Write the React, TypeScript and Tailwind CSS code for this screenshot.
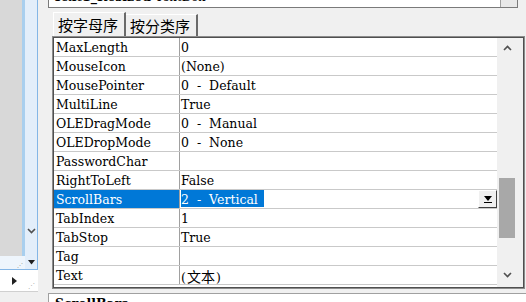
const rows = [
  { name: "MaxLength", value: "0" },
  { name: "MouseIcon", value: "(None)" },
  { name: "MousePointer", value: "0 - Default" },
  { name: "MultiLine", value: "True" },
  { name: "OLEDragMode", value: "0 - Manual" },
  { name: "OLEDropMode", value: "0 - None" },
  { name: "PasswordChar", value: "" },
  { name: "RightToLeft", value: "False" },
  { name: "ScrollBars", value: "2 - Vertical", selected: true },
  { name: "TabIndex", value: "1" },
  { name: "TabStop", value: "True" },
  { name: "Tag", value: "" },
  { name: "Text", value: "", cjk: true },
];

function Chevron({ up }: { up?: boolean }) {
  return (
    <svg width="9" height="6" viewBox="0 0 9 6">
      <polyline
        points={up ? "1,5 4.5,1.5 8,5" : "1,1 4.5,4.5 8,1"}
        fill="none"
        stroke="#505050"
        strokeWidth="1.6"
      />
    </svg>
  );
}

function LeftPane() {
  return (
    <div className="w-[48px] h-full shrink-0 flex flex-col bg-[#f0f0f0]">
      <div className="h-[256px] shrink-0 flex">
        <div className="w-[22px] bg-[#d8d8d8]" />
        <div className="w-[3px] bg-[#a9cfee]" />
        <div className="w-[13px] bg-[#e3eefa] border-r border-[#84b6e6] flex flex-col justify-end items-center pb-[22px]">
          <Chevron />
        </div>
      </div>
      <div className="h-[14px] shrink-0 flex">
        <div className="w-[25px] bg-[#eef5fc] border-b border-[#84b6e6] flex items-end justify-end pr-[2px] pb-[1px]">
          <span className="text-[6px] leading-none text-[#9a9a9a]">⋰</span>
        </div>
        <div className="w-[13px] bg-[#e3eefa] border-r border-b border-[#84b6e6] flex items-center justify-center">
          <svg width="7" height="5" viewBox="0 0 7 5">
            <polygon points="0,0 7,0 3.5,4.5" fill="#202020" />
          </svg>
        </div>
      </div>
      <div className="h-[22px] shrink-0 w-[38px] flex items-center bg-white border-b border-[#d0d0d0]">
        <div className="w-[28px] h-full flex items-center justify-center">
          <svg width="5" height="8" viewBox="0 0 5 8">
            <polygon points="0,0 5,4 0,8" fill="#202020" />
          </svg>
        </div>
        <span className="text-[7px] leading-none text-[#b0b0b0] self-end pb-[2px]">⋰</span>
      </div>
    </div>
  );
}

export default function App() {
  return (
    <div className="w-[526px] h-[302px] overflow-hidden bg-[#f0f0f0] flex text-black">
      <LeftPane />
      <div className="flex-1 flex flex-col min-w-0">
        <div className="h-[9px] shrink-0 overflow-hidden">
          <div className="mt-[-13px] h-[21px] mr-[8px] flex bg-white border border-[#7a7a7a]">
            <div className="flex-1 pl-[4px] font-['DejaVu_Serif',serif] text-[12.5px] leading-[18px]">
              <b>Text1_Resized</b> TextBox
            </div>
            <div className="w-[17px] border-l border-[#a0a0a0] bg-[#e8e8e8]" />
          </div>
        </div>
        <div className="h-[27px] shrink-0 flex items-end pl-[5px] font-['Noto_Sans_CJK_SC',sans-serif] text-[15px]">
          <div className="w-[73px] h-[24px] pl-[4px] leading-[24px] border-t border-l border-white border-r-2 border-r-[#6a6a6a] bg-[#f0f0f0]">
            按字母序
          </div>
          <div className="w-[72px] h-[22px] pl-[4px] leading-[21px] border-t border-white border-r-2 border-r-[#6a6a6a]">
            按分类序
          </div>
        </div>
        <div className="ml-[4px] w-[473px] h-[253px] shrink-0 border border-[#8c8c8c] bg-white font-['DejaVu_Serif','Noto_Sans_CJK_SC',serif] text-[12.5px]">
          <div className="h-full border border-[#4f4f4f] flex">
            <div className="w-[443px] flex flex-col">
              {rows.map((r) => (
                <div key={r.name} className="h-[19px] shrink-0 flex border-b border-[#c9c9c9]">
                  <div
                    className={
                      "w-[126px] border-r border-[#a0a0a0] pl-[2px] pt-[2px] leading-[16px] whitespace-pre " +
                      (r.selected ? "bg-[#0078d7] text-white" : "")
                    }
                  >
                    {r.name}
                  </div>
                  <div className="flex-1 flex pl-[1px] whitespace-pre [word-spacing:4px]">
                    {r.selected ? (
                      <>
                        <span className="bg-[#0078d7] text-white self-start h-[17px] pt-[2px] leading-[15px] pr-[6px]">{r.value}</span>
                        <div className="flex-1" />
                        <div className="w-[19px] h-[18px] bg-[#f0f0f0] border border-t-white border-l-white border-r-[#404040] border-b-[#404040] flex items-center justify-center">
                          <svg width="8" height="7" viewBox="0 0 8 7">
                            <polygon points="0,0 8,0 4,5" fill="#000" />
                            <rect x="0" y="6" width="8" height="1" fill="#000" />
                          </svg>
                        </div>
                      </>
                    ) : r.cjk ? (
                      <span className="pt-[2px] leading-[16px]">
                        (<span className="font-['Noto_Sans_CJK_SC',sans-serif] text-[14px] px-[1px]">文本</span>)
                      </span>
                    ) : (
                      <span className="pt-[2px] leading-[16px]">{r.value}</span>
                    )}
                  </div>
                </div>
              ))}
            </div>
            <div className="flex-1 flex bg-[#f0f0f0]">
              <div className="w-[20px] flex flex-col bg-[#f0f0f0]">
                <div className="h-[20px] flex items-center justify-center">
                  <Chevron up />
                </div>
                <div className="h-[120px]" />
                <div className="h-[60px] mx-[2px] bg-[#a8a8a8]" />
                <div className="flex-1" />
                <div className="h-[20px] flex items-center justify-center mb-[2px]">
                  <Chevron />
                </div>
              </div>
            </div>
          </div>
        </div>
        <div className="mt-[4px] flex-1 min-h-0 border-t border-l border-[#a0a0a0] bg-white pl-[6px] pt-[4px] font-['DejaVu_Serif',serif] text-[12.5px] font-bold leading-none">
          ScrollBars
        </div>
      </div>
    </div>
  );
}
